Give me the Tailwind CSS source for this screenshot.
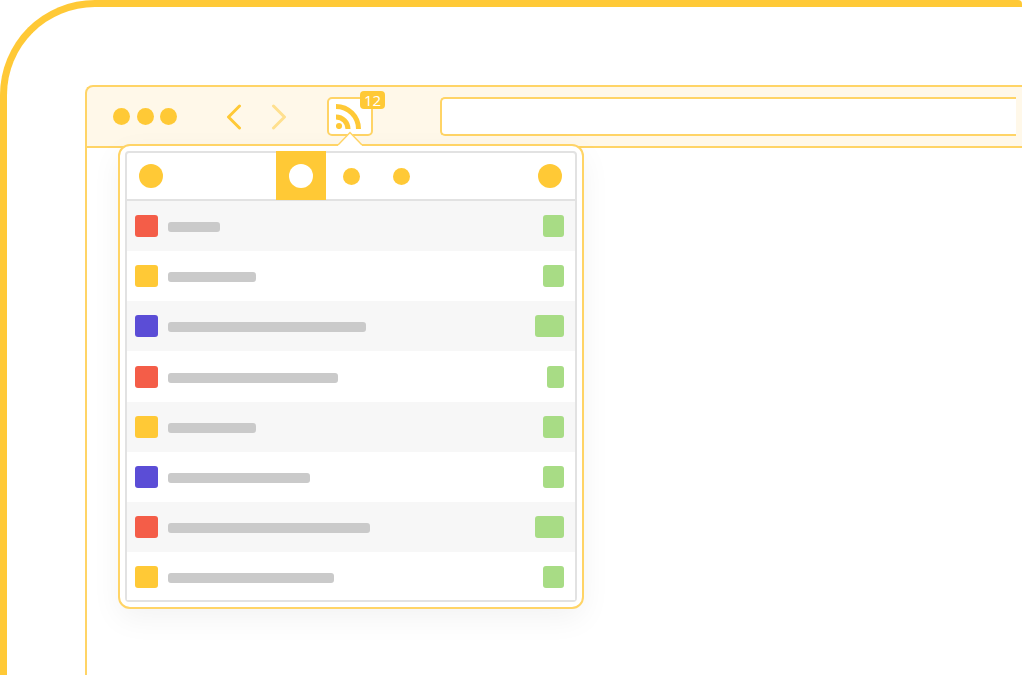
<!DOCTYPE html>
<html lang="en">
<head>
    <meta charset="UTF-8">
    <meta name="viewport" content="width=device-width, initial-scale=1.0">
    <title>RSS reader popup</title>
    <script src="https://cdn.jsdelivr.net/npm/@tailwindcss/browser@4"></script>
</head>
<body class="bg-white overflow-hidden font-['Open_Sans',sans-serif]">
    <div class="w-[1024px] h-[675px] overflow-hidden">
        <!-- Outer device frame -->
        <div class="w-[1022px] h-[700px] border-l-7 border-t-7 border-[#ffc936] rounded-tl-[95px] rounded-tr-[4px] pl-[78px] pt-[78px]">
            <!-- Browser window -->
            <div class="relative h-[600px] flex flex-col">
                <!-- Toolbar -->
                <div class="h-[63px] shrink-0 flex items-center bg-[#fff8e9] border-2 border-r-0 border-[#ffd466] rounded-tl-[8px] pl-[26px]">
                    <div class="flex gap-[6.5px]">
                        <span class="w-[17px] h-[17px] rounded-full bg-[#ffc936]"></span>
                        <span class="w-[17px] h-[17px] rounded-full bg-[#ffc936]"></span>
                        <span class="w-[17px] h-[17px] rounded-full bg-[#ffc936]"></span>
                    </div>
                    <svg class="ml-[49px] w-[16px] h-[26px]" viewBox="0 0 16 26" fill="none" stroke="#ffc936" stroke-width="3" stroke-linecap="round" stroke-linejoin="round"><path d="M13.5 2 L2.5 13 L13.5 24"/></svg>
                    <svg class="ml-[29px] w-[16px] h-[26px]" viewBox="0 0 16 26" fill="none" stroke="#ffe08f" stroke-width="3" stroke-linecap="round" stroke-linejoin="round"><path d="M2.5 2 L13.5 13 L2.5 24"/></svg>
                    <!-- RSS button -->
                    <div class="relative ml-[40px] w-[46px] h-[39px] bg-white border-2 border-[#ffd466] rounded-[5px] flex items-center justify-center">
                        <svg class="w-[25px] h-[25px] mr-[3px]" viewBox="0 0 25 25" fill="none" stroke="#ffc936" stroke-width="5">
                            <circle cx="3" cy="22" r="3.1" fill="#ffc936" stroke="none"/>
                            <path d="M0 13 A12 12 0 0 1 12 25"/>
                            <path d="M0 2.5 A22.5 22.5 0 0 1 22.5 25"/>
                        </svg>
                        <span class="absolute left-[31px] top-[-8px] w-[25px] h-[18px] rounded-[4px] bg-[#ffc936] text-white text-[15px] leading-[18px] text-center">12</span>
                    </div>
                    <!-- Address bar -->
                    <div class="ml-[67px] w-[576px] h-[39px] bg-white border-2 border-r-0 border-[#ffd466] rounded-l-[5px]"></div>
                </div>
                <div class="flex-1 border-l-2 border-[#ffd466]"></div>
                <!-- Popover -->
                <div class="absolute left-[33px] top-[59px] w-[466px] h-[465px] bg-white border-2 border-[#ffd466] rounded-[12px] p-[5px] shadow-[0_10px_30px_rgba(0,0,0,0.05)]">
                    <!-- Caret -->
                    <svg class="absolute left-[218px] top-[-15px] w-[26px] h-[17px]" viewBox="0 0 26 17" fill="none">
                        <path d="M0 14 L12 1 L24 14 L24 17 L0 17 Z" fill="#fff"/>
                        <path d="M0 14 L12 1.5 L24 14" stroke="#ffd466" stroke-width="1.5"/>
                    </svg>
                    <div class="h-[451px] border-2 border-[#e2e2e2] rounded-[4px]">
                        <!-- Tabs -->
                        <div class="h-[48px] flex items-center border-b-2 border-[#e2e2e2] pl-[12px] pr-[13px]">
                            <span class="w-[24px] h-[24px] rounded-full bg-[#ffc936]"></span>
                            <div class="ml-[113px] -mt-[2px] self-start w-[50px] h-[49px] bg-[#ffc936] flex items-center justify-center">
                                <span class="w-[24px] h-[24px] rounded-full bg-white"></span>
                            </div>
                            <div class="w-[50px] flex justify-center"><span class="w-[17px] h-[17px] rounded-full bg-[#ffc936]"></span></div>
                            <div class="w-[50px] flex justify-center"><span class="w-[17px] h-[17px] rounded-full bg-[#ffc936]"></span></div>
                            <span class="ml-auto w-[24px] h-[24px] rounded-full bg-[#ffc936]"></span>
                        </div>
                        <!-- Rows -->
                        <div id="rows">
                            <div class="h-[50px] flex items-center pl-[8px] pr-[11px] bg-[#f7f7f7]"><span class="w-[23px] h-[22px] rounded-[3px] bg-[#f45d48]"></span><span class="ml-[10px] mt-[2px] w-[52px] h-[10px] rounded-[3px] bg-[#cacaca]"></span><span class="ml-auto w-[21px] h-[22px] rounded-[3px] bg-[#a8dc85]"></span></div>
                            <div class="h-[50px] flex items-center pl-[8px] pr-[11px] bg-white"><span class="w-[23px] h-[22px] rounded-[3px] bg-[#ffc936]"></span><span class="ml-[10px] mt-[2px] w-[88px] h-[10px] rounded-[3px] bg-[#cacaca]"></span><span class="ml-auto w-[21px] h-[22px] rounded-[3px] bg-[#a8dc85]"></span></div>
                            <div class="h-[50px] flex items-center pl-[8px] pr-[11px] bg-[#f7f7f7]"><span class="w-[23px] h-[22px] rounded-[3px] bg-[#5b4dd6]"></span><span class="ml-[10px] mt-[2px] w-[198px] h-[10px] rounded-[3px] bg-[#cacaca]"></span><span class="ml-auto w-[29px] h-[22px] rounded-[3px] bg-[#a8dc85]"></span></div>
                            <div class="h-[51px] flex items-center pl-[8px] pr-[11px] bg-white"><span class="w-[23px] h-[22px] rounded-[3px] bg-[#f45d48]"></span><span class="ml-[10px] mt-[2px] w-[170px] h-[10px] rounded-[3px] bg-[#cacaca]"></span><span class="ml-auto w-[17px] h-[22px] rounded-[3px] bg-[#a8dc85]"></span></div>
                            <div class="h-[50px] flex items-center pl-[8px] pr-[11px] bg-[#f7f7f7]"><span class="w-[23px] h-[22px] rounded-[3px] bg-[#ffc936]"></span><span class="ml-[10px] mt-[2px] w-[88px] h-[10px] rounded-[3px] bg-[#cacaca]"></span><span class="ml-auto w-[21px] h-[22px] rounded-[3px] bg-[#a8dc85]"></span></div>
                            <div class="h-[50px] flex items-center pl-[8px] pr-[11px] bg-white"><span class="w-[23px] h-[22px] rounded-[3px] bg-[#5b4dd6]"></span><span class="ml-[10px] mt-[2px] w-[142px] h-[10px] rounded-[3px] bg-[#cacaca]"></span><span class="ml-auto w-[21px] h-[22px] rounded-[3px] bg-[#a8dc85]"></span></div>
                            <div class="h-[50px] flex items-center pl-[8px] pr-[11px] bg-[#f7f7f7]"><span class="w-[23px] h-[22px] rounded-[3px] bg-[#f45d48]"></span><span class="ml-[10px] mt-[2px] w-[202px] h-[10px] rounded-[3px] bg-[#cacaca]"></span><span class="ml-auto w-[29px] h-[22px] rounded-[3px] bg-[#a8dc85]"></span></div>
                            <div class="h-[48px] pt-[2px] flex items-center pl-[8px] pr-[11px] bg-white"><span class="w-[23px] h-[22px] rounded-[3px] bg-[#ffc936]"></span><span class="ml-[10px] mt-[2px] w-[166px] h-[10px] rounded-[3px] bg-[#cacaca]"></span><span class="ml-auto w-[21px] h-[22px] rounded-[3px] bg-[#a8dc85]"></span></div>
                        </div>
                    </div>
                </div>
            </div>
        </div>
    </div>
</body>
</html>
